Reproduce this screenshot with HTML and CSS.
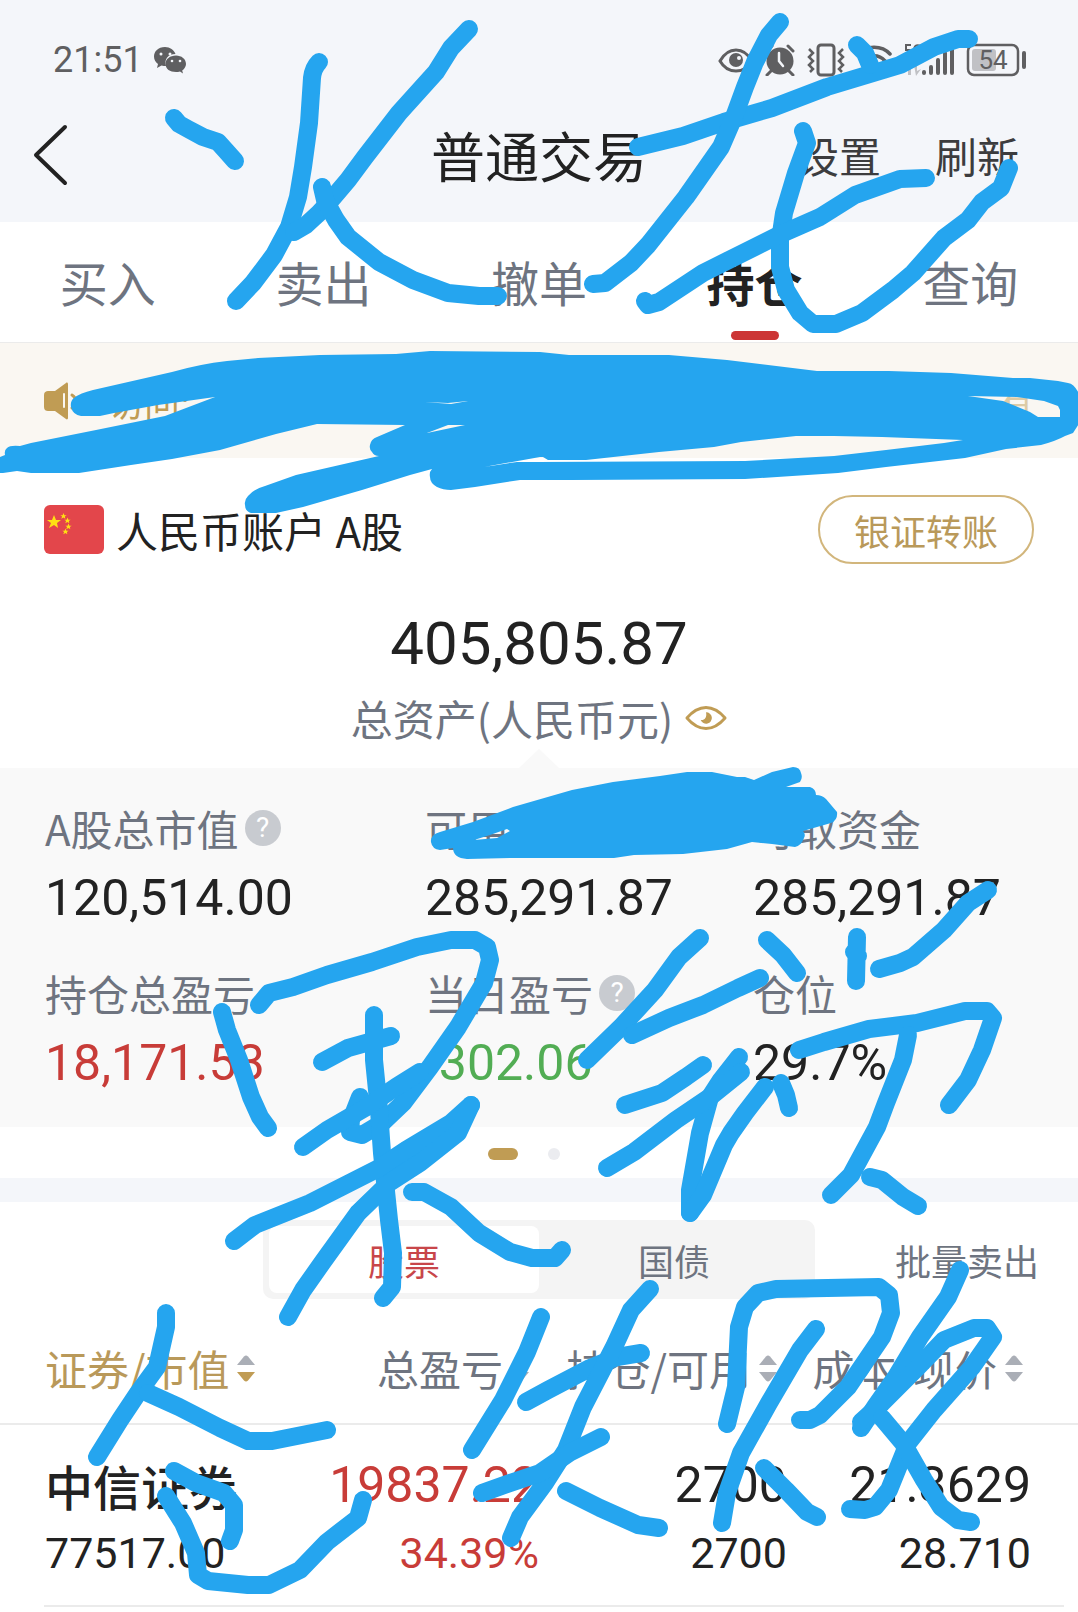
FILE: index.html
```html
<!DOCTYPE html>
<html lang="zh-CN">
<head>
	<meta charset="UTF-8">
	<meta name="viewport" content="width=device-width, initial-scale=1.0">
	<title>普通交易</title>
	<link rel="stylesheet" href="styles.css">
</head>
<body>
	<header class="top">
		<div class="status">
			<span class="time">21:51</span>
			<svg class="wechat" width="34" height="28" viewBox="0 0 34 28">
				<path fill="#5f5f61" d="M12 1C5 1 1 5.500 1 10.500c0 3 1.500 5.500 4 7.500l-1 4 4.500-2.500c1.500.5 3 .5 4.500.5C11 13 15 8 22.500 8 21 4 17 1 12 1z"/>
				<path fill="#5f5f61" d="M23 9.500c-6 0-10.500 3.500-10.500 8.500S17 26 23 26c1.500 0 2.500-.2 4-.6l3 2-.8-3C31.500 23 33 20.500 33 18c0-5-4.500-8.500-10-8.500z"/>
				<g fill="#f4f6fa"><circle cx="8" cy="8" r="1.500"/><circle cx="17" cy="8" r="1.500"/><circle cx="19" cy="15" r="1.300"/><circle cx="27" cy="15" r="1.300"/></g>
			</svg>
			<div class="status-icons">
				<svg width="36" height="32" viewBox="0 0 36 32">
					<path fill="none" stroke="#5f5f61" stroke-width="3" d="M2 17C6 10 12 6 18 6s12 4 16 11c-4 7-10 10-16 10S6 24 2 17z"/>
					<circle cx="18" cy="16" r="7" fill="#5f5f61"/><circle cx="21" cy="14" r="2" fill="#f4f6fa"/>
				</svg>
				<svg width="32" height="32" viewBox="0 0 32 32">
					<circle cx="16" cy="17" r="13.500" fill="#5f5f61"/>
					<path fill="none" stroke="#5f5f61" stroke-width="3" stroke-linecap="round" d="M3 6l5-4M29 7l-5-5M7 27l-4 4M25 27l4 4"/>
					<path fill="none" stroke="#f4f6fa" stroke-width="2.500" stroke-linecap="round" d="M15 9v8l4 5"/>
				</svg>
				<svg width="40" height="34" viewBox="0 0 40 34">
					<rect x="12" y="2" width="16" height="30" rx="3" fill="none" stroke="#5f5f61" stroke-width="3"/>
					<path fill="none" stroke="#5f5f61" stroke-width="2.500" d="M3 6l4 4-4 4 4 4-4 4 4 4-3 3M37 6l-4 4 4 4-4 4 4 4-4 4 3 3"/>
				</svg>
				<svg width="36" height="32" viewBox="2 0 36 32">
					<path fill="none" stroke="#5f5f61" stroke-width="3.500" stroke-linecap="round" d="M4 10c8-9 24-9 32 0M9 17c6-7 16-7 22 0M15 23c3-3 7-3 10 0"/>
					<circle cx="20" cy="28" r="3" fill="#5f5f61"/>
				</svg>
				<svg width="54" height="34" viewBox="0 0 54 34">
					<path fill="none" stroke="#5f5f61" stroke-width="2" d="M9 2H4v5h3c3 0 3 6-1 6H3M19 3c-5-2-7 0-7 5s2 6 7 4V8h-3"/>
					<path fill="#c0c1c5" d="M6 22h3v10H6zM12 22h3v6l4-2-5 7z"/>
					<path fill="none" stroke="#5f5f61" stroke-width="4" stroke-linecap="round" d="M22 29v1M29 24v6M36 17v13M43 10v20M50 4v26"/>
				</svg>
				<svg width="62" height="34" viewBox="0 0 62 34">
					<rect x="2" y="2" width="50" height="30" rx="6" fill="none" stroke="#5f5f61" stroke-width="2.500"/>
					<rect x="6" y="6" width="24" height="22" rx="3" fill="#c0c1c5"/>
					<path stroke="#5f5f61" stroke-width="4" stroke-linecap="round" d="M58 10v14"/>
					<text class="battery-text" x="27" y="26" text-anchor="middle">54</text>
				</svg>
			</div>
		</div>
		<div class="titlebar">
			<button class="back" aria-label="返回">
				<svg width="36" height="62" viewBox="0 0 36 62"><path fill="none" stroke="#222" stroke-width="4" stroke-linecap="round" stroke-linejoin="round" d="M32 3L3 31l29 28"/></svg>
			</button>
			<h1>普通交易</h1>
			<div class="actions">
				<button>设置</button>
				<button>刷新</button>
			</div>
		</div>
	</header>

	<nav class="tabs">
		<a href="#">买入</a>
		<a href="#">卖出</a>
		<a href="#">撤单</a>
		<a href="#" class="active">持仓</a>
		<a href="#">查询</a>
	</nav>

	<div class="notice">
		<svg width="36" height="38" viewBox="0 0 36 38">
			<path fill="#c09c54" d="M4 9h7L22 1c1-1 2 0 2 1v34c0 1-1 2-2 1l-11-8H4c-2 0-4-1-4-4V13c0-3 2-4 4-4z"/>
			<path fill="none" stroke="#faf7f2" stroke-width="2" stroke-linecap="round" d="M20 12v13"/>
			<path fill="none" stroke="#c09c54" stroke-width="3" stroke-linecap="round" d="M28 13c5 3 5 9 0 13"/>
		</svg>
		<span>访问:</span>
		<span class="notice-end">有</span>
	</div>

	<section class="account">
		<svg width="60" height="49" viewBox="0 0 60 49">
			<rect width="60" height="49" rx="6" fill="#e3464b"/>
			<g fill="#fee113">
				<path id="star" d="M10 10l2 5h5l-4 3 1 5-4-3-5 3 2-5-4-3h5z"/>
				<use href="#star" transform="translate(15 3.500) scale(.45)"/>
				<use href="#star" transform="translate(19 8) scale(.45)"/>
				<use href="#star" transform="translate(20 14) scale(.45)"/>
				<use href="#star" transform="translate(17 19) scale(.45)"/>
			</g>
		</svg>
		<h2>人民币账户 A股</h2>
		<button class="transfer">银证转账</button>
	</section>

	<section class="total">
		<div class="total-amount">405,805.87</div>
		<div class="total-label">
			<span>总资产(人民币元)</span>
			<svg width="42" height="26" viewBox="0 0 44 26">
				<path fill="none" stroke="#c09c54" stroke-width="3" stroke-linejoin="round" d="M2 13C8 6 14 2 22 2s14 4 20 11c-6 7-12 11-20 11S8 20 2 13z"/>
				<path fill="#c09c54" d="M22 7a6 6 0 1 1-5.500 8c3 1 7-2 5.500-8z"/>
			</svg>
		</div>
	</section>

	<section class="summary">
		<div class="item">
			<div class="label">A股总市值<span class="help">?</span></div>
			<div class="value">120,514.00</div>
		</div>
		<div class="item">
			<div class="label">可用资金</div>
			<div class="value">285,291.87</div>
		</div>
		<div class="item">
			<div class="label">可取资金</div>
			<div class="value">285,291.87</div>
		</div>
		<div class="item">
			<div class="label">持仓总盈亏</div>
			<div class="value red">18,171.53</div>
		</div>
		<div class="item">
			<div class="label">当日盈亏<span class="help">?</span></div>
			<div class="value green">-302.06</div>
		</div>
		<div class="item">
			<div class="label">仓位</div>
			<div class="value">29.7%</div>
		</div>
	</section>
	<div class="pager"><i class="on"></i><i></i></div>

	<section class="holdings">
		<div class="switch-row">
			<div class="switch">
				<button class="on">股票</button>
				<button>国债</button>
			</div>
			<button class="batch">批量卖出</button>
		</div>
		<table>
			<thead>
				<tr>
					<th class="sorted"><button>证券/市值<svg class="sort" width="18" height="27" viewBox="0 0 18 27"><path class="up" d="M7 1.500q2-2 4 0L18 10H0z"/><path class="down" d="M0 17h18l-7 8.500q-2 2-4 0z"/></svg></button></th>
					<th><button>总盈亏<svg class="sort" width="18" height="27" viewBox="0 0 18 27"><path class="up" d="M7 1.500q2-2 4 0L18 10H0z"/><path class="down" d="M0 17h18l-7 8.500q-2 2-4 0z"/></svg></button></th>
					<th><button>持仓/可用<svg class="sort" width="18" height="27" viewBox="0 0 18 27"><path class="up" d="M7 1.500q2-2 4 0L18 10H0z"/><path class="down" d="M0 17h18l-7 8.500q-2 2-4 0z"/></svg></button></th>
					<th><button>成本/现价<svg class="sort" width="18" height="27" viewBox="0 0 18 27"><path class="up" d="M7 1.500q2-2 4 0L18 10H0z"/><path class="down" d="M0 17h18l-7 8.500q-2 2-4 0z"/></svg></button></th>
				</tr>
			</thead>
			<tbody>
				<tr>
					<td><b>中信证券</b><small>77517.00</small></td>
					<td class="red"><b>19837.22</b><small>34.39%</small></td>
					<td><b>2700</b><small>2700</small></td>
					<td><b>21.3629</b><small>28.710</small></td>
				</tr>
			</tbody>
		</table>
	</section>

	<!-- handwriting on top of the page -->
	<svg class="ink" viewBox="0 0 1078 1612">
		<g class="fill">
			<path fill-rule="evenodd" d="M71 407Q70 401 74 398Q80 393 93 390L172 372Q200 364 227 361L258 358L320 355L396 354L430 351L540 352L569 355L669 355L727 360L817 371L889 371L951 373L1013 378L1030 378L1058 381L1068 383Q1075 384 1080 396L1080 422L1073 433L1065 436Q1056 441 1041 445L1006 449L965 458L886 467L838 473L745 479L572 480L520 480L475 487L451 490Q443 490 437 487Q430 483 430 477Q429 472 432 469L410 475L362 490L303 507L276 513L251 513Q245 511 245 505Q244 500 248 496Q254 489 265 486L296 475L379 456Q374 456 372 452Q369 449 370 445Q371 439 377 437L405 425L317 424L276 434L220 450L172 459L131 465L79 473L31 473L17 471L3 473L0 473L0 457L5 455Q4 450 7 448Q10 445 20 446L31 443L96 430L165 416L215 397L158 405L114 413L100 416L81 416Q73 415 71 407Z
				M968 396L1017 397L1044 401L1058 406L1060 410L1060 417L1038 417L1030 412L1003 401Z
				M484 467L540 457L543 457L548 460L586 460L659 452L714 447L741 442L796 436L834 436L882 437L963 440L944 443L886 450L834 456L745 461L538 462L517 462Z
				M427 433L448 425L465 425Z
				M425 402L448 403L468 401L451 404Z"/>
			<path fill-rule="evenodd" d="M431 842Q430 835 440 832L473 822L513 807L572 790L613 782L660 776L687 772L712 772L737 777L745 777L754 780L772 772L793 767Q800 767 801 773Q803 778 800 782L786 787L810 787Q816 789 816 795Q822 795 826 799L837 812Q838 820 831 823L803 831Q806 834 804 838Q801 846 795 847L772 844L752 842L727 849L683 854L634 855L614 858L513 858L467 859Q453 858 453 848L440 850Q432 849 431 842Z
				M474 840L490 835L507 829L510 831L497 838Z"/>
			<path d="M471 1105L379 1160L385 1190L458 1137Z"/>
		</g>
		<g class="strokes">
			<!-- 火 -->
			<path d="M174 118L179 124L188 129L203 137L218 142L227 152L235 161"/>
			<path d="M319 62Q313 68 312 78L309 123L303 167L298 197L289 227L274 255L253 283L236 301"/>
			<path d="M469 29L451 48L436 72L399 113L365 157L348 180L331 200L319 213L306 225L294 232"/>
			<path d="M322 187L325 200L336 220L348 237L379 262L413 280L448 293L479 296L498 296"/>
			<!-- 龙 -->
			<path d="M638 147L683 136L724 122L772 108L827 87L900 65L934 47L958 39L969 39"/>
			<path d="M780 22L769 35L755 62L745 87L734 117L721 147L686 197L648 245L631 263L605 283L593 284"/>
			<path d="M857 45L865 53L870 65"/>
			<path d="M803 131L807 143L796 173L784 213L780 240L780 267L786 290L800 313L813 324L836 324L862 313L893 290L913 273L944 238L968 220L982 202L1001 188L1009 168"/>
			<path d="M645 301L648 305L659 302L703 273L745 252L779 235L820 217L855 195L900 179L926 178"/>
			<!-- 果 -->
			<path d="M222 1012L227 1030L239 1060L251 1097L260 1117L268 1128"/>
			<path d="M259 1005L269 993L293 987L327 975L372 962L417 947L451 940L475 940L487 947L490 960L484 983L458 1027L430 1067L403 1103L382 1123L362 1135L350 1132L351 1120L360 1097"/>
			<path d="M322 1062L348 1048L391 1036"/>
			<path d="M374 1015L374 1060L379 1110L382 1153L389 1220L393 1253L392 1287L383 1298"/>
			<path d="M303 1147L327 1130L365 1108L396 1087L420 1072"/>
			<path d="M471 1105L451 1123L406 1150L379 1168L310 1203L255 1225L234 1241"/>
			<path d="M471 1105L458 1133L420 1163L389 1183L358 1213L322 1263L303 1290L288 1317"/>
			<path d="M412 1192L424 1192L451 1207L479 1233L510 1252L532 1258L555 1258L562 1250"/>
			<!-- 锁 -->
			<path d="M700 938L679 957L655 990L621 1027L587 1060"/>
			<path d="M632 1035L669 1018L703 1005L738 988L760 978"/>
			<path d="M625 1105L662 1093L686 1077L703 1065"/>
			<path d="M739 1057L721 1080L710 1097L700 1133L690 1190L690 1213"/>
			<path d="M741 1072L710 1097L676 1120L634 1152L607 1168"/>
			<path d="M765 1087L745 1113L731 1133L724 1145L703 1195L690 1213"/>
			<path d="M781 1083L786 1095L789 1108"/>
			<path d="M767 940L783 955L797 973"/>
			<path d="M857 937L856 981M854 952L858 956"/>
			<path d="M988 890L968 903L944 930L913 957L900 963L879 969"/>
			<path d="M799 1050L824 1042L869 1029L917 1023L965 1011L987 1011L993 1018L982 1050L968 1080L949 1105"/>
			<path d="M908 1035L903 1060L886 1103L877 1127L851 1175L831 1195"/>
			<path d="M870 1177L882 1180L903 1197L918 1206"/>
			<!-- 仓 -->
			<path d="M166 1313L166 1327L157 1367L138 1393L120 1420L97 1457"/>
			<path d="M148 1393L179 1407L220 1428L248 1441L272 1441L327 1430"/>
			<path d="M174 1471L196 1483L224 1493L234 1505L234 1530L230 1541"/>
			<path d="M166 1496L183 1523L196 1553L198 1575L208 1581L248 1585L269 1585L300 1570L327 1542L358 1518L363 1500"/>
			<!-- 失 -->
			<path d="M541 1317L527 1352L503 1400L472 1450"/>
			<path d="M526 1402L548 1390L590 1368L617 1357L641 1353"/>
			<path d="M650 1289L631 1310L614 1347L583 1407L566 1450L545 1483L520 1517L511 1538"/>
			<path d="M482 1493L510 1483L540 1473L569 1453L601 1437"/>
			<path d="M566 1491L600 1508L638 1525L659 1528"/>
			<!-- 败 -->
			<path d="M727 1424L736 1387L739 1327L745 1307L758 1293L776 1289L879 1287L889 1295L891 1313L882 1337L848 1387L820 1415L810 1420L800 1420"/>
			<path d="M816 1329L800 1350L769 1403L741 1453L727 1493L722 1523"/>
			<path d="M764 1468L786 1490L807 1512L817 1517"/>
			<path d="M960 1270L948 1297L920 1337L896 1377L875 1407L861 1428"/>
			<path d="M861 1422L882 1403L917 1368L944 1340L974 1328L987 1328L993 1337L972 1367L934 1410L908 1443L889 1490L875 1507L865 1510L850 1509"/>
			<path d="M882 1418L903 1443L924 1480L941 1507L958 1520L971 1522"/>
		</g>
	</svg>
</body>
</html>
```

FILE: styles.css
```css
* {
	box-sizing: border-box;
}
body {
	margin: 0;
	position: relative;
	background-color: white;
	color: #222;
	font-family: "Noto Sans CJK SC", Roboto, sans-serif;
	font-size: 42px;
	line-height: 60px;
	overflow-x: hidden;
}
button {
	border: none;
	background: none;
	padding: 0;
	margin: 0;
	font: inherit;
	color: inherit;
	cursor: pointer;
	white-space: nowrap;
}
a {
	color: inherit;
	text-decoration: none;
}
h1, h2 {
	margin: 0;
	font-weight: 400;
}
svg {
	flex: none;
	display: block;
}

/* header */
.top {
	background-color: #f4f6fa;
	height: 222px;
	padding-top: 30px;
}
.status {
	display: flex;
	align-items: center;
	padding: 0 50px 0 53px;
	color: #5f5f61;
	font-family: Roboto, sans-serif;
}
.time {
	font-size: 36px;
}
.wechat {
	margin-left: 10px;
}
.status-icons {
	display: flex;
	align-items: center;
	gap: 10px;
	margin-left: auto;
}
.battery-text {
	font-size: 26px;
	fill: #5f5f61;
}
.titlebar {
	display: grid;
	grid-template-columns: 1fr auto 1fr;
	align-items: center;
	padding: 0 33px;
	margin-top: 34px;
}
.titlebar h1 {
	font-size: 54px;
}
.actions {
	display: flex;
	justify-content: flex-end;
	gap: 54px;
	margin-right: 26px;
	font-size: 42px;
	color: #3c3c3e;
}
.tabs {
	display: flex;
	height: 121px;
	border-bottom: 1px solid #ebebeb;
	color: #6e7480;
	font-size: 48px;
}
.tabs a {
	flex: 1;
	display: flex;
	flex-direction: column;
	align-items: center;
	padding-top: 29px;
}
.tabs .active {
	color: #222;
	font-weight: 700;
}
.tabs .active::after {
	content: "";
	width: 48px;
	height: 9px;
	margin-top: 20px;
	border-radius: 5px;
	background-color: #cc3535;
}
.notice {
	display: flex;
	align-items: center;
	height: 115px;
	padding: 0 44px;
	background-color: #faf7f2;
	color: #c09c54;
	font-size: 36px;
}
.notice span {
	margin-left: 28px;
}
.notice .notice-end {
	margin-left: auto;
	color: #dccba6;
}

/* account */
.account {
	display: flex;
	align-items: center;
	padding: 37px 44px 0;
}
.account h2 {
	font-size: 42px;
	margin-left: 12px;
}
.transfer {
	margin-left: auto;
	width: 216px;
	height: 69px;
	border: 2px solid #d2b67c;
	border-radius: 35px;
	color: #b9995a;
	font-size: 36px;
}
.total {
	height: 204px;
	padding-top: 50px;
	text-align: center;
}
.total-amount {
	font-family: Roboto, sans-serif;
	font-size: 60px;
}
.total-label {
	display: flex;
	justify-content: center;
	align-items: center;
	gap: 12px;
	margin-top: 14px;
	color: #6e7480;
}
.summary {
	position: relative;
	display: grid;
	grid-template-columns: 380fr 328fr 325fr;
	row-gap: 35px;
	padding: 30px 0 34px 45px;
	background-color: #f9f9f9;
}
.summary::before {
	content: "";
	position: absolute;
	left: 50%;
	top: -19px;
	border: 20px solid transparent;
	border-top: none;
	border-bottom: 19px solid #f9f9f9;
	transform: translateX(-50%);
}
.label {
	display: flex;
	align-items: center;
	color: #6e7480;
}
.help {
	width: 36px;
	height: 36px;
	margin-left: 6px;
	border-radius: 50%;
	background-color: #c8cbd0;
	color: white;
	font-family: Roboto, sans-serif;
	font-size: 28px;
	line-height: 36px;
	text-align: center;
}
.value {
	margin-top: 10px;
	font-family: Roboto, sans-serif;
	font-size: 50px;
}
.red {
	color: #c83c38;
}
.green {
	color: #52ad54;
}
.pager {
	display: flex;
	justify-content: center;
	align-items: center;
	gap: 30px;
	height: 51px;
	padding: 2px 30px 0 0;
}
.pager i {
	width: 12px;
	height: 12px;
	border-radius: 6px;
	background-color: #ebecf0;
}
.pager .on {
	width: 30px;
	background-color: #c09c54;
}

/* holdings */
.holdings {
	border-top: 24px solid #f4f6fa;
	padding-top: 18px;
}
.switch-row {
	display: grid;
	grid-template-columns: 1fr 552px 1fr;
	align-items: center;
	padding-right: 39px;
	padding-left: 39px;
	color: #6e7480;
	font-size: 36px;
}
.switch {
	grid-column: 2;
	display: flex;
	height: 79px;
	padding: 6px;
	border-radius: 10px;
	background-color: #f4f4f4;
}
.switch button {
	flex: 1;
	border-radius: 8px;
}
.switch .on {
	background-color: white;
	color: #c8464a;
}
.batch {
	justify-self: end;
}
table {
	width: 100%;
	table-layout: fixed;
	border-collapse: collapse;
}
th, td {
	padding: 0;
	text-align: right;
	white-space: nowrap;
	font-weight: 400;
}
th:nth-child(1) {
	width: 27%;
}
th:nth-child(3) {
	width: 23%;
}
th:nth-child(4) {
	width: 27%;
}
th {
	height: 125px;
	padding-top: 14px;
	padding-right: 10px;
	border-bottom: 2px solid #ebebeb;
	color: #6e7480;
}
th:first-child, td:first-child {
	text-align: left;
	padding-left: 45px;
}
th:last-child {
	padding-right: 55px;
}
td {
	font-family: Roboto, "Noto Sans CJK SC", sans-serif;
}
td:last-child {
	padding-right: 47px;
}
th button {
	display: inline-flex;
	align-items: center;
	gap: 8px;
}
.sorted {
	color: #b9995a;
}
.sort path {
	fill: #aaaeb6;
}
.sorted .down {
	fill: #c09c54;
}
td b, td small {
	display: block;
}
td b {
	padding-top: 30px;
	font-size: 50px;
	font-weight: 400;
}
td:first-child b {
	font-family: "Noto Sans CJK SC", sans-serif;
	font-size: 48px;
	font-weight: 500;
}
td small {
	padding: 8px 0 24px;
	font-size: 43px;
}
tbody {
	background: linear-gradient(#ebebeb, #ebebeb) 44px 100% / calc(100% - 58px) 2px no-repeat;
}

/* drawn over everything */
.ink {
	position: absolute;
	top: 0;
	left: 0;
	width: 100%;
	pointer-events: none;
}
.ink .fill {
	fill: #25a5ef;
}
.ink .strokes {
	fill: none;
	stroke: #25a5ef;
	stroke-width: 18px;
	stroke-linecap: round;
	stroke-linejoin: round;
}
```
